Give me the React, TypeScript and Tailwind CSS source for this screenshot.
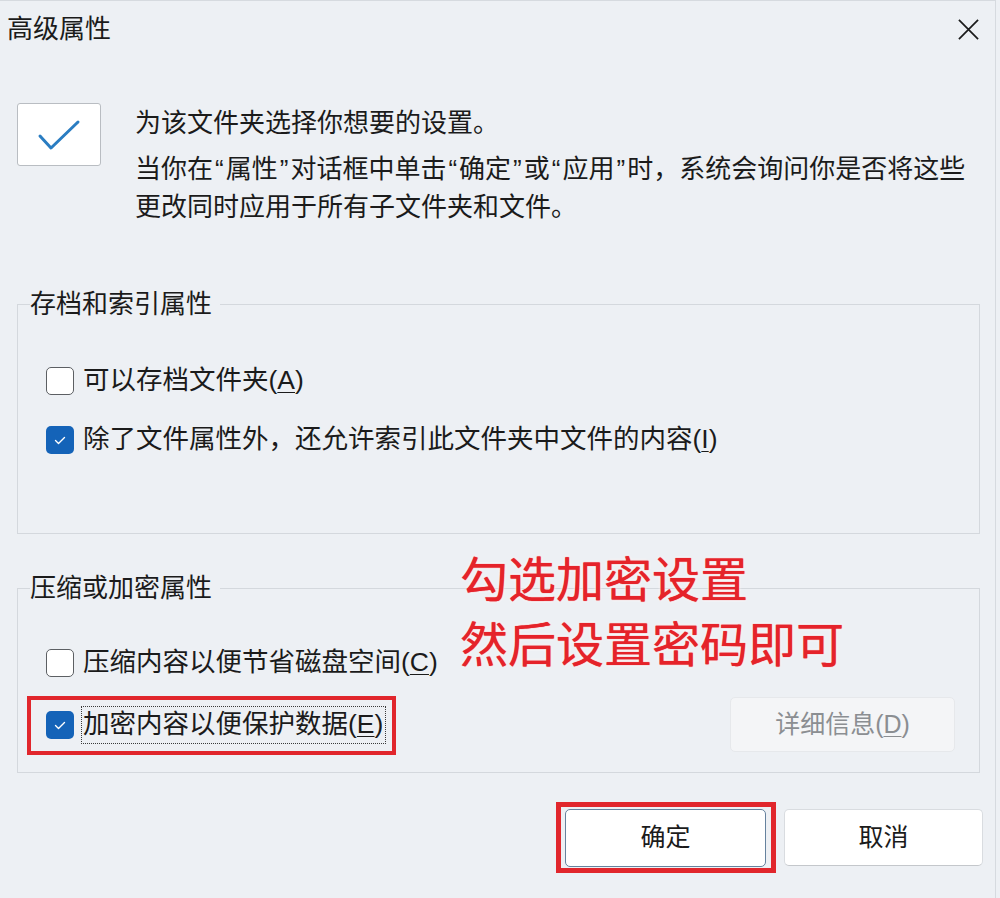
import type { ReactNode } from 'react'

const font = "font-['Liberation_Sans','Noto_Sans_CJK_SC',sans-serif]"

function Box({ checked }: { checked?: boolean }) {
  if (checked) {
    return (
      <span className="flex h-[28px] w-[28px] shrink-0 items-center justify-center rounded-[5px] bg-[#1463b8]">
        <svg width="16" height="16" viewBox="0 0 16 16" fill="none">
          <path d="M3.5 8.5l3 3L12.5 5.5" stroke="#fff" strokeWidth="1.4" strokeLinecap="round" strokeLinejoin="round" />
        </svg>
      </span>
    )
  }
  return <span className="h-[28px] w-[28px] shrink-0 rounded-[5px] border-[1.5px] border-[#5c5f63] bg-white" />
}

function Key({ children }: { children: ReactNode }) {
  return <span className="underline decoration-1 underline-offset-[3px]">{children}</span>
}

// quote marks sit a little wider than the latin glyph
function Q({ children }: { children: ReactNode }) {
  return <span className="px-[2px]">{children}</span>
}

export default function App() {
  return (
    <div className={`relative h-[898px] w-[1000px] overflow-hidden bg-[#edf0f4] text-[#1b1b1b] ${font}`}>
      <div className="h-full w-[996px] border-r border-t border-[#d6dadf] pl-[17px] pr-[15px]">
        {/* title bar */}
        <div className="-ml-[10px] flex h-[56px] items-center justify-between">
          <span className="text-[26px]">高级属性</span>
          <svg width="23" height="23" viewBox="0 0 24 24" fill="none">
            <path d="M2 2l20 20M22 2L2 22" stroke="#1b1b1b" strokeWidth="1.8" />
          </svg>
        </div>

        {/* header */}
        <div className="mt-[46px] flex gap-[34px]">
          <div className="flex h-[63px] w-[84px] shrink-0 items-center justify-center rounded-[3px] border border-[#b9bdc2] bg-white">
            <svg width="44" height="32" viewBox="0 0 44 32" fill="none">
              <path d="M3 17l11 12L41 3" stroke="#2a7dc2" strokeWidth="3" strokeLinecap="round" strokeLinejoin="round" />
            </svg>
          </div>
          <div className="pt-[1px] text-[26px] leading-[38px]">
            <p>为该文件夹选择你想要的设置。</p>
            <p className="mt-[8px]">
              当你在<Q>“</Q>属性<Q>”</Q>对话框中单击<Q>“</Q>确定<Q>”</Q>或<Q>“</Q>应用<Q>”</Q>时，系统会询问你是否将这些
              <br />
              更改同时应用于所有子文件夹和文件。
            </p>
          </div>
        </div>

        {/* archive group */}
        <fieldset className="mt-[61px] border border-[#d4d8dd] px-[12px] pb-[73px]">
          <legend className="pr-[8px] text-[26px] leading-[34px]">存档和索引属性</legend>
          <div className="flex flex-col gap-[19px] pl-[16px] pt-[40px] text-[26.5px]">
            <div className="flex h-[40px] items-center gap-[9px]">
              <Box />
              <span>可以存档文件夹(<Key>A</Key>)</span>
            </div>
            <div className="flex h-[40px] items-center gap-[9px]">
              <Box checked />
              <span>除了文件属性外，还允许索引此文件夹中文件的内容(<Key>I</Key>)</span>
            </div>
          </div>
        </fieldset>

        {/* compress / encrypt group */}
        <fieldset className="mt-[37px] border border-[#d4d8dd] px-[12px] pb-[20px]">
          <legend className="pr-[8px] text-[26px] leading-[34px]">压缩或加密属性</legend>
          <div className="flex flex-col gap-[14px] pl-[16px] pr-[12px] pt-[38px] text-[26.5px]">
            <div className="flex h-[40px] items-center gap-[9px]">
              <Box />
              <span>压缩内容以便节省磁盘空间(<Key>C</Key>)</span>
            </div>
            <div className="flex h-[55px] items-center justify-between">
              <div className="relative flex h-[38px] items-center gap-[7px]">
                <Box checked />
                <span className="flex h-[38px] items-center border border-dotted border-[#3a3a3a] pl-[1px] pr-[2px]">
                  加密内容以便保护数据(<Key>E</Key>)
                </span>
                <div className="pointer-events-none absolute -bottom-[11px] -left-[19px] -right-[10px] -top-[10px] border-[4px] border-[#e1262c]" />
              </div>
              <button className="h-[55px] w-[225px] rounded-[5px] border border-[#e6e8eb] bg-[#f4f5f7] text-[25px] text-[#8b8e92]">
                详细信息(<Key>D</Key>)
              </button>
            </div>
          </div>
        </fieldset>

        {/* buttons */}
        <div className="mt-[36px] flex justify-end gap-[18px]">
          <div className="relative">
            <button className="h-[58px] w-[201px] rounded-[5px] border-[1.5px] border-[#66829e] bg-white text-[25px]">确定</button>
            <div className="pointer-events-none absolute -bottom-[6px] -left-[9px] -right-[10px] -top-[7px] border-[5px] border-[#e1262c]" />
          </div>
          <button className="-mr-[3px] h-[57px] w-[199px] rounded-[5px] border border-[#d9dce0] border-b-[#c4c7cb] bg-white text-[25px]">
            取消
          </button>
        </div>
      </div>

      {/* annotation */}
      <div className="absolute left-[460px] top-[548px] text-[48px] leading-[65px] text-[#e5232a] [text-shadow:0_0_1px_#e5232a,0_0_3px_#fff,0_0_3px_#fff]">
        <p>勾选加密设置</p>
        <p>然后设置密码即可</p>
      </div>
    </div>
  )
}
